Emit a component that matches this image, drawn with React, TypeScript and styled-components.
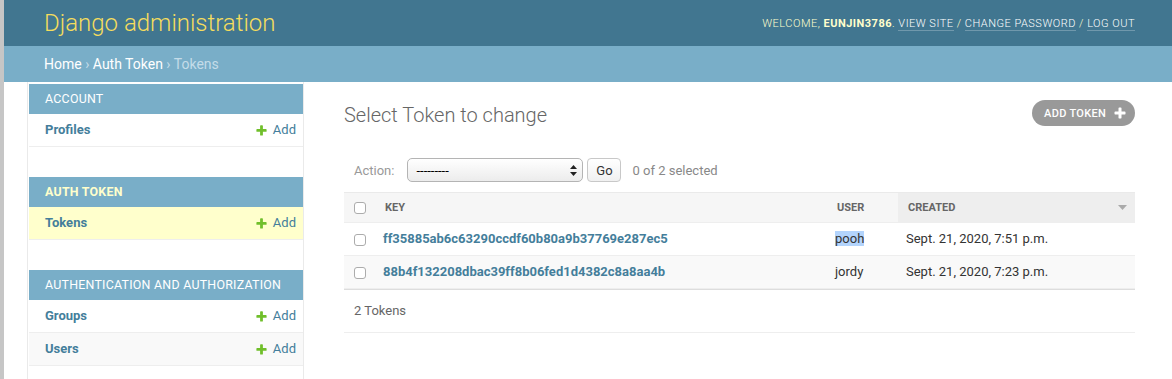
import styled, { createGlobalStyle } from 'styled-components';

type ModelLink = {
  name: string;
  current?: boolean;
};

type AppModule = {
  label: string;
  current?: boolean;
  models: ModelLink[];
};

type TokenRow = {
  key: string;
  user: string;
  created: string;
  highlightUser?: boolean;
};

const apps: AppModule[] = [
  { label: 'Account', models: [{ name: 'Profiles' }] },
  { label: 'Auth Token', current: true, models: [{ name: 'Tokens', current: true }] },
  {
    label: 'Authentication and Authorization',
    models: [{ name: 'Groups' }, { name: 'Users' }],
  },
];

const tokens: TokenRow[] = [
  {
    key: 'ff35885ab6c63290ccdf60b80a9b37769e287ec5',
    user: 'pooh',
    created: 'Sept. 21, 2020, 7:51 p.m.',
    highlightUser: true,
  },
  {
    key: '88b4f132208dbac39ff8b06fed1d4382c8a8aa4b',
    user: 'jordy',
    created: 'Sept. 21, 2020, 7:23 p.m.',
  },
];

const GlobalStyle = createGlobalStyle`
  *, *::before, *::after {
    box-sizing: border-box;
  }
  html, body {
    margin: 0;
    padding: 0;
  }
  body {
    font-family: Roboto, 'Liberation Sans', Arial, sans-serif;
    font-size: 14px;
    color: #333;
    background: #fff;
  }
`;

const Window = styled.div`
  display: flex;
  min-height: 100vh;
`;

const WindowEdge = styled.div`
  flex: 0 0 4px;
  background: #c6c6c6;
`;

const Page = styled.div`
  flex: 1;
  min-width: 0;
  display: flex;
  flex-direction: column;
`;

const Header = styled.header`
  display: flex;
  justify-content: space-between;
  align-items: center;
  height: 46px;
  padding: 0 37px 0 40px;
  background: #417690;
  color: #ffc;
`;

const Branding = styled.h1`
  margin: 0;
  font-size: 24px;
  font-weight: 300;
  line-height: 28px;
  color: #f5dd5d;
`;

const UserTools = styled.div`
  font-size: 11px;
  font-weight: 300;
  letter-spacing: 0.5px;
  text-transform: uppercase;
  color: #ffc;

  strong {
    font-weight: 700;
  }
`;

const ToolLink = styled.a`
  color: #fff;
  text-decoration: none;
  border-bottom: 1px solid rgba(255, 255, 255, 0.25);
`;

const Breadcrumbs = styled.nav`
  padding: 10px 40px;
  background: #79aec8;
  color: #c4dce8;
  font-size: 14px;
  line-height: 16px;
`;

const Crumb = styled.a`
  color: #fff;
  text-decoration: none;
`;

const Main = styled.div`
  flex: 1;
  display: flex;
`;

const SidebarToggle = styled.div`
  flex: 0 0 24px;
  border-right: 1px solid #eaeaea;
`;

const NavSidebar = styled.nav`
  flex: 0 0 276px;
  min-width: 0;
  overflow: hidden;
  padding: 2px 0 0 1px;
  border-right: 1px solid #eaeaea;
`;

const Module = styled.section`
  margin-bottom: 30px;
`;

const Caption = styled.div<{ $current?: boolean }>`
  padding: 8px 16px;
  font-size: 12.4px;
  line-height: 14px;
  letter-spacing: 0.25px;
  text-transform: uppercase;
  white-space: nowrap;
  background: #79aec8;
  color: ${(p) => (p.$current ? '#ffc' : '#fff')};
  font-weight: ${(p) => (p.$current ? 700 : 400)};
`;

const ModelRow = styled.div<{ $current?: boolean; $alt?: boolean }>`
  display: flex;
  justify-content: space-between;
  padding: 8px 7px 8px 16px;
  font-size: 13px;
  line-height: 16px;
  border-bottom: 1px solid #eee;
  background: ${(p) => (p.$current ? '#ffc' : p.$alt ? '#f9f9f9' : '#fff')};
`;

const ModelName = styled.a`
  color: #447e9b;
  font-weight: 700;
  text-decoration: none;
`;

const AddLink = styled.a`
  display: flex;
  align-items: center;
  gap: 5px;
  color: #447e9b;
  text-decoration: none;
`;

const Content = styled.main`
  flex: 1;
  min-width: 0;
  padding: 21px 37px 0 40px;
`;

const TitleRow = styled.div`
  display: flex;
  justify-content: space-between;
  align-items: flex-start;
  margin-bottom: 20px;
`;

const Title = styled.h1`
  margin: 0;
  font-size: 20px;
  font-weight: 300;
  line-height: 24px;
  color: #666;
`;

const ObjectTool = styled.a`
  display: flex;
  align-items: center;
  gap: 7px;
  height: 26px;
  margin-top: -3px;
  padding: 0 8px 0 12px;
  border-radius: 15px;
  background: #999;
  color: #fff;
  font-size: 11px;
  font-weight: 500;
  letter-spacing: 0.3px;
  text-transform: uppercase;
  text-decoration: none;
`;

const Actions = styled.div`
  display: flex;
  align-items: center;
  height: 45px;
  padding: 1px 10px 0;
  font-size: 13px;
  color: #999;
`;

const ActionSelect = styled.div`
  display: flex;
  align-items: center;
  justify-content: space-between;
  width: 176px;
  height: 24px;
  margin-left: 13px;
  padding: 0 5px 0 8px;
  border: 1px solid #b4b4b4;
  border-radius: 5px;
  background: linear-gradient(#ffffff, #ececec);
  color: #000;
  font-size: 13px;
`;

const GoButton = styled.button`
  height: 24px;
  width: 34px;
  margin-left: 4px;
  padding: 0;
  border: 1px solid #c8c8c8;
  border-radius: 4px;
  background: linear-gradient(#ffffff, #f0f0f0);
  color: #333;
  font-family: inherit;
  font-size: 13px;
`;

const Counter = styled.span`
  margin-left: 11px;
  color: #888;
`;

const Results = styled.table`
  width: 100%;
  table-layout: fixed;
  border-collapse: collapse;
  font-size: 13px;
`;

const HeadCell = styled.th<{ $sorted?: boolean }>`
  padding: 0;
  border-top: 1px solid #eaeaea;
  border-bottom: 1px solid #eee;
  background: ${(p) => (p.$sorted ? '#eee' : '#f6f6f6')};
  color: #666;
  font-size: 11px;
  font-weight: 700;
  text-align: left;
  text-transform: uppercase;
`;

const HeadText = styled.div<{ $center?: boolean }>`
  display: flex;
  justify-content: ${(p) => (p.$center ? 'center' : 'space-between')};
  align-items: center;
  padding: ${(p) => (p.$center ? '8px 0' : '8px 8px 8px 10px')};
  line-height: 13px;
`;

const CheckCell = styled.td`
  padding: 0;
  text-align: center;
  vertical-align: middle;
`;

const Check = styled.span`
  display: inline-block;
  width: 12px;
  height: 12px;
  border: 1px solid #acacac;
  border-radius: 3px;
  background: #fff;
  vertical-align: middle;
`;

const Row = styled.tr<{ $alt?: boolean }>`
  background: ${(p) => (p.$alt ? '#f9f9f9' : '#fff')};
  border-bottom: 1px solid #eee;
`;

const Cell = styled.td`
  padding: 8px;
  line-height: 16px;
  color: #333;
  white-space: nowrap;
`;

const KeyLink = styled.a`
  color: #447e9b;
  font-weight: 700;
  text-decoration: none;
`;

const Selected = styled.span`
  background: #b3d4fc;
`;

const Paginator = styled.div`
  padding: 10px;
  line-height: 22px;
  border-top: 1px solid #ddd;
  border-bottom: 1px solid #eee;
  color: #666;
  font-size: 13px;
`;

const PlusIcon = ({ size, color }: { size: number; color: string }) => (
  <svg width={size} height={size} viewBox='0 0 1792 1792'>
    <path
      fill={color}
      d='M1600 796v192q0 40-28 68t-68 28h-416v416q0 40-28 68t-68 28h-192q-40 0-68-28t-28-68v-416h-416q-40 0-68-28t-28-68v-192q0-40 28-68t68-28h416v-416q0-40 28-68t68-28h192q40 0 68 28t28 68v416h416q40 0 68 28t28 68z'
    />
  </svg>
);

const SortArrow = () => (
  <svg width='9' height='5' viewBox='0 0 9 5'>
    <polygon points='0,0 9,0 4.5,5' fill='#aaa' />
  </svg>
);

const SelectArrows = () => (
  <svg width='7' height='11' viewBox='0 0 7 11'>
    <polygon points='3.5,0 7,4 0,4' fill='#222' />
    <polygon points='0,7 7,7 3.5,11' fill='#222' />
  </svg>
);

const App = () => {
  return (
    <>
      <GlobalStyle />
      <Window>
        <WindowEdge />
        <Page>
          <Header>
            <Branding>Django administration</Branding>
            <UserTools>
              Welcome, <strong>eunjin3786</strong>. <ToolLink>View site</ToolLink> /{' '}
              <ToolLink>Change password</ToolLink> / <ToolLink>Log out</ToolLink>
            </UserTools>
          </Header>
          <Breadcrumbs>
            <Crumb>Home</Crumb> › <Crumb>Auth Token</Crumb> › Tokens
          </Breadcrumbs>
          <Main>
            <SidebarToggle />
            <NavSidebar>
              {apps.map((app) => (
                <Module key={app.label}>
                  <Caption $current={app.current}>{app.label}</Caption>
                  {app.models.map((model, i) => (
                    <ModelRow key={model.name} $current={model.current} $alt={i % 2 === 1}>
                      <ModelName>{model.name}</ModelName>
                      <AddLink>
                        <PlusIcon size={13} color='#70bf2b' />
                        Add
                      </AddLink>
                    </ModelRow>
                  ))}
                </Module>
              ))}
            </NavSidebar>
            <Content>
              <TitleRow>
                <Title>Select Token to change</Title>
                <ObjectTool>
                  Add token
                  <PlusIcon size={14} color='#fff' />
                </ObjectTool>
              </TitleRow>
              <Actions>
                <label>Action:</label>
                <ActionSelect>
                  ---------
                  <SelectArrows />
                </ActionSelect>
                <GoButton>Go</GoButton>
                <Counter>0 of 2 selected</Counter>
              </Actions>
              <Results>
                <colgroup>
                  <col style={{ width: 31 }} />
                  <col />
                  <col style={{ width: 71 }} />
                  <col style={{ width: 237 }} />
                </colgroup>
                <thead>
                  <tr>
                    <HeadCell>
                      <HeadText $center>
                        <Check />
                      </HeadText>
                    </HeadCell>
                    <HeadCell>
                      <HeadText>Key</HeadText>
                    </HeadCell>
                    <HeadCell>
                      <HeadText>User</HeadText>
                    </HeadCell>
                    <HeadCell $sorted>
                      <HeadText>
                        Created
                        <SortArrow />
                      </HeadText>
                    </HeadCell>
                  </tr>
                </thead>
                <tbody>
                  {tokens.map((t, i) => (
                    <Row key={t.key} $alt={i % 2 === 1}>
                      <CheckCell>
                        <Check />
                      </CheckCell>
                      <Cell>
                        <KeyLink>{t.key}</KeyLink>
                      </Cell>
                      <Cell>{t.highlightUser ? <Selected>{t.user}</Selected> : t.user}</Cell>
                      <Cell>{t.created}</Cell>
                    </Row>
                  ))}
                </tbody>
              </Results>
              <Paginator>2 Tokens</Paginator>
            </Content>
          </Main>
        </Page>
      </Window>
    </>
  );
};

export default App;
